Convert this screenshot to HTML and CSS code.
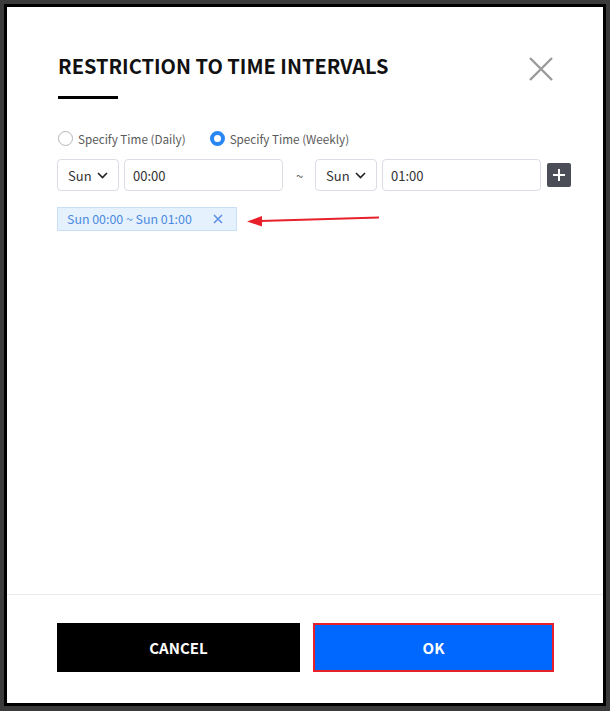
FILE: index.html
```html
<!DOCTYPE html>
<html lang="en">

<head>
  <meta charset="UTF-8">
  <meta name="viewport" content="width=device-width, initial-scale=1.0">
  <title>Restriction to time intervals</title>
  <link rel="stylesheet" href="styles.css">
</head>

<body>
  <div class="dialog">
    <div class="content">
      <div class="header">
        <h2 class="title">RESTRICTION TO TIME INTERVALS</h2>
        <span class="close">
          <svg width="26" height="26" viewBox="0 0 26 26">
            <path d="M2 2 L24 24 M24 2 L2 24" stroke="#9a9a9a" stroke-width="2.4" fill="none"/>
          </svg>
        </span>
      </div>

      <div class="radios">
        <label class="radio">
          <span class="dot"></span>
          <span>Specify Time (Daily)</span>
        </label>
        <label class="radio checked">
          <span class="dot"></span>
          <span>Specify Time (Weekly)</span>
        </label>
      </div>

      <div class="range">
        <div class="select">
          <span>Sun</span>
          <svg width="11" height="7" viewBox="0 0 11 7">
            <path d="M1 1 L5.5 5.5 L10 1" stroke="#222" stroke-width="1.6" fill="none"/>
          </svg>
        </div>
        <div class="input">00:00</div>
        <span class="tilde">~</span>
        <div class="select">
          <span>Sun</span>
          <svg width="11" height="7" viewBox="0 0 11 7">
            <path d="M1 1 L5.5 5.5 L10 1" stroke="#222" stroke-width="1.6" fill="none"/>
          </svg>
        </div>
        <div class="input">01:00</div>
        <span class="add">
          <svg width="12" height="12" viewBox="0 0 12 12">
            <path d="M6 0 V12 M0 6 H12" stroke="#fff" stroke-width="2" fill="none"/>
          </svg>
        </span>
      </div>

      <div class="tags">
        <div class="tag">
          <span>Sun 00:00 ~ Sun 01:00</span>
          <svg width="10" height="10" viewBox="0 0 10 10">
            <path d="M1 1 L9 9 M9 1 L1 9" stroke="#5a8ee0" stroke-width="1.5" fill="none"/>
          </svg>
        </div>
        <!-- 标注箭头 -->
        <svg class="arrow" width="134" height="14" viewBox="0 0 134 14">
          <path d="M13 8 L132 4.5" stroke="#e8202a" stroke-width="2" fill="none"/>
          <path d="M0 8.5 L15 3 L15 13.5 Z" fill="#e8202a"/>
        </svg>
      </div>
    </div>

    <div class="footer">
      <div class="btn cancel">CANCEL</div>
      <div class="btn ok">OK</div>
    </div>
  </div>
</body>

</html>
```

FILE: styles.css
```css
body{
  margin: 0;
  background: #3b3b3b;
  font-family: "Noto Sans CJK KR", "Noto Sans", sans-serif;
}
.dialog{
  box-sizing: border-box;
  width: 602px;
  height: 702px;
  margin: 4px;
  border: 3px solid #000;
  background: #fff;
  display: flex;
  flex-direction: column;
}
.content{
  flex: 1;
  padding: 0 31px 0 51px;
}
.header{
  display: flex;
  justify-content: space-between;
  align-items: flex-start;
  padding-top: 46px;
  padding-right: 20px;
}
.title{
  margin: 0;
  font-size: 20px;
  line-height: 26px;
  font-weight: 700;
  color: #111;
}
.title::after{
  content: "";
  display: block;
  width: 60px;
  height: 3px;
  margin-top: 17px;
  background: #000;
}
.close{
  display: flex;
  margin-top: 3px;
  margin-right: -2px;
}
.radios{
  display: flex;
  gap: 24px;
  margin-top: 31px;
  font-size: 11.7px;
  color: #5a5a5a;
}
.radio{
  display: flex;
  align-items: center;
  gap: 5px;
}
.radio .dot{
  box-sizing: border-box;
  width: 15px;
  height: 15px;
  border-radius: 50%;
  border: 1px solid #b5b5b5;
  background: #fff;
}
.radio.checked .dot{
  border: 4px solid #2a86f3;
  background: #fff;
}
.range{
  display: flex;
  align-items: center;
  margin-top: 12px;
  font-size: 13px;
  color: #333;
}
.range > *{
  flex-shrink: 0;
}
.select,
.input{
  box-sizing: border-box;
  height: 32px;
  border: 1px solid #dcdce4;
  border-radius: 4px;
  display: flex;
  align-items: center;
}
.select{
  width: 62px;
  padding: 0 10px;
  justify-content: space-between;
  margin-left: -1px;
}
.input{
  width: 159px;
  padding: 0 8px;
  margin-left: 5px;
}
.tilde{
  width: 33px;
  text-align: center;
  color: #666;
}
.add{
  width: 24px;
  height: 24px;
  margin-left: 6px;
  border-radius: 2px;
  background: #4b4e57;
  display: flex;
  justify-content: center;
  align-items: center;
}
.tags{
  display: flex;
  align-items: center;
  margin-top: 16px;
}
.tag{
  box-sizing: border-box;
  width: 180px;
  height: 24px;
  margin-left: -1px;
  padding: 0 13px 0 9px;
  border: 1px solid #c9dff6;
  background: #e5f1fd;
  color: #4a8ae0;
  font-size: 12.4px;
  display: flex;
  justify-content: space-between;
  align-items: center;
}
.arrow{
  margin-left: 10px;
  margin-top: 1px;
}
.footer{
  border-top: 1px solid #ebebeb;
  padding: 28px 0 31px 50px;
  display: flex;
  gap: 13px;
}
.btn{
  box-sizing: border-box;
  height: 49px;
  display: flex;
  justify-content: center;
  align-items: center;
  color: #fff;
  font-size: 15px;
  font-weight: 700;
}
.cancel{
  width: 243px;
  background: #000;
}
.ok{
  width: 241px;
  background: #0068ff;
  border: 2px solid #e8202a;
}
```
